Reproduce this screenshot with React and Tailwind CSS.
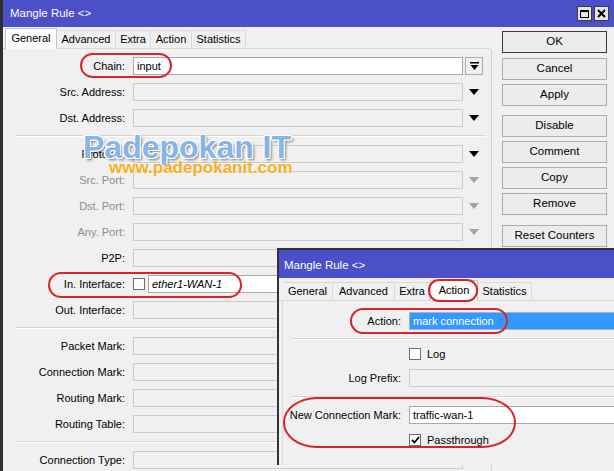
import React from 'react';

const font = "font-['Liberation_Sans',Arial,sans-serif]";

const DownArrow = ({ muted }) => (
  <svg width="10" height="6" viewBox="0 0 10 6">
    <path d="M0 0h10L5 6z" fill={muted ? '#a3a3a3' : '#000'} />
  </svg>
);

const Field = ({ children, white, className = '' }) => (
  <div
    className={`flex h-[18px] shrink-0 items-center overflow-hidden whitespace-nowrap border px-[3px] ${
      white ? 'border-[#a9a9a9] bg-white' : 'border-[#cbcbcb] bg-[#f0f0f0]'
    } ${className}`}
  >
    {children}
  </div>
);

const Row = ({ label, muted, arrow, children }) => (
  <div className="flex h-[18px] items-center">
    <div className={`w-[130px] shrink-0 pr-[8px] text-right ${muted ? 'text-[#8c8c8c]' : ''}`}>{label}</div>
    {children || <Field className="w-[330px]" />}
    {arrow && (
      <div className="ml-[2px] flex w-[18px] justify-center">
        <DownArrow muted={arrow === 'muted'} />
      </div>
    )}
  </div>
);

const Sep = ({ className = '' }) => (
  <div className={`h-[2px] border-t border-b border-t-[#d5d5d5] border-b-white ${className}`} />
);

const Checkbox = ({ checked }) => (
  <div className="flex h-[12px] w-[12px] shrink-0 items-center justify-center border border-[#6f6f6f] bg-white">
    {checked && (
      <svg width="9" height="8" viewBox="0 0 9 8">
        <path d="M1 4l2.5 2.5L8 1" fill="none" stroke="#000" strokeWidth="1.8" />
      </svg>
    )}
  </div>
);

const Tabs = ({ tabs, active, className = '' }) => (
  <div className={`flex h-[21px] items-end border-b border-[#d9d9d9] ${className}`}>
    {tabs.map(([name, w]) =>
      name === active ? (
        <div
          key={name}
          className={`-mb-px flex h-[21px] items-center justify-center border border-b-0 border-[#c5c5c5] bg-[#fbfbfb] pb-[1px] ${w}`}
        >
          {name}
        </div>
      ) : (
        <div
          key={name}
          className={`flex h-[18px] items-center justify-center border border-b-0 border-l-0 border-[#d9d9d9] bg-[#f0f0f0] ${w}`}
        >
          {name}
        </div>
      )
    )}
  </div>
);

const Btn = ({ children, strong, className = '' }) => (
  <div
    className={`flex h-[22px] items-center justify-center border bg-[#ececec] text-[11.5px] ${
      strong ? 'border-[#3a3a3a]' : 'border-[#adadad]'
    } ${className}`}
  >
    {children}
  </div>
);

const Oval = ({ className }) => (
  <div className={`pointer-events-none absolute border-[2.5px] border-[#d8232a] ${className}`} />
);

export default function App() {
  return (
    <div className={`relative h-[471px] w-[614px] overflow-hidden bg-[#f0f0f0] text-[11px] leading-none text-black ${font}`}>
      {/* main window */}
      <div className="flex h-full flex-col border-l-[3px] border-[#2f2f2f]">
        <div className="flex h-[27px] shrink-0 items-center bg-[#4b4fc8] pl-[7px] text-white">
          <span className="text-[11.5px]">Mangle Rule &lt;&gt;</span>
          <div className="ml-auto mr-[5px] flex gap-[2px]">
            <div className="flex h-[15px] w-[15px] items-center justify-center border border-[#3c3c3c] bg-[#e4e4e4]">
              <div className="h-[8px] w-[9px] border border-t-2 border-black" />
            </div>
            <div className="flex h-[15px] w-[15px] items-center justify-center border border-[#3c3c3c] bg-[#e4e4e4]">
              <svg width="9" height="9" viewBox="0 0 9 9">
                <path d="M1 1l7 7M8 1L1 8" stroke="#000" strokeWidth="2" />
              </svg>
            </div>
          </div>
        </div>

        <div className="flex min-h-0 flex-1">
          <div className="w-[488px] shrink-0">
            <Tabs
              className="mt-[1px] pl-[2px]"
              active="General"
              tabs={[
                ['General', 'w-[52px]'],
                ['Advanced', 'w-[59px]'],
                ['Extra', 'w-[35px]'],
                ['Action', 'w-[41px]'],
                ['Statistics', 'w-[54px]'],
              ]}
            />
            <div className="flex flex-col gap-2 pt-[8px]">
              <Row label="Chain:">
                <Field white className="w-[330px]">input</Field>
                <div className="ml-[2px] flex h-[18px] w-[18px] items-center justify-center border border-[#adadad] bg-[#f0f0f0]">
                  <svg width="9" height="8" viewBox="0 0 9 8">
                    <rect x="0" y="0" width="9" height="1.5" fill="#000" />
                    <path d="M0.5 3h8L4.5 8z" fill="#000" />
                  </svg>
                </div>
              </Row>
              <Row label="Src. Address:" arrow="dark" />
              <Row label="Dst. Address:" arrow="dark" />
              <Sep className="ml-[12px] mr-[5px]" />
              <Row label="Protocol:" arrow="dark" />
              <Row label="Src. Port:" muted arrow="muted" />
              <Row label="Dst. Port:" muted arrow="muted" />
              <Row label="Any. Port:" muted arrow="muted" />
              <Row label="P2P:" arrow="dark" />
              <Row label="In. Interface:">
                <Checkbox />
                <Field white className="ml-[3px] w-[315px] italic">ether1-WAN-1</Field>
              </Row>
              <Row label="Out. Interface:" arrow="dark" />
              <Sep className="ml-[12px] mr-[5px]" />
              <Row label="Packet Mark:" arrow="dark" />
              <Row label="Connection Mark:" arrow="dark" />
              <Row label="Routing Mark:" arrow="dark" />
              <Row label="Routing Table:" arrow="dark" />
              <Sep className="ml-[12px] mr-[5px]" />
              <Row label="Connection Type:" arrow="dark" />
            </div>
          </div>

          <div className="mt-[23px] w-px bg-[#d2d2d2]" />

          <div className="ml-[10px] flex w-[105px] flex-col pt-[4px]">
            <Btn strong>OK</Btn>
            <Btn className="mt-[5px]">Cancel</Btn>
            <Btn className="mt-[4px]">Apply</Btn>
            <Btn className="mt-[9px]">Disable</Btn>
            <Btn className="mt-[4px]">Comment</Btn>
            <Btn className="mt-[4px]">Copy</Btn>
            <Btn className="mt-[4px]">Remove</Btn>
            <Btn className="mt-[10px]">Reset Counters</Btn>
          </div>
        </div>
      </div>

      {/* watermark */}
      <div className="pointer-events-none absolute left-[83px] top-[131px] whitespace-nowrap text-[32px] font-bold leading-none text-[#86b5ea] [text-shadow:1px_1px_0_#fff,-1px_-1px_0_#fff,1px_-1px_0_#fff,-1px_1px_0_#fff,0_1px_0_#fff,0_-1px_0_#fff,1px_0_0_#fff,-1px_0_0_#fff,2px_2px_3px_rgba(0,0,0,0.55)]">
        Padepokan IT
      </div>
      <div className="pointer-events-none absolute left-[109px] top-[159px] whitespace-nowrap text-[17px] font-bold leading-none text-[#f6b01e] [text-shadow:0_0_2px_#fff]">
        www.padepokanit.com
      </div>

      {/* second window */}
      <div className="absolute left-[277px] top-[248px] flex h-[217px] w-[337px] flex-col overflow-hidden border-l-2 border-t-2 border-[#333] bg-[#f0f0f0]">
        <div className="flex h-[28px] shrink-0 items-center bg-[#4b4fc8] pl-[5px] pt-[3px] text-[11.5px] text-white">
          Mangle Rule &lt;&gt;
        </div>
        <Tabs
          className="mt-[2px] pl-[4px]"
          active="Action"
          tabs={[
            ['General', 'w-[50px]'],
            ['Advanced', 'w-[62px]'],
            ['Extra', 'w-[35px]'],
            ['Action', 'w-[48px]'],
            ['Statistics', 'w-[54px]'],
          ]}
        />
        <div className="ml-[3px] flex flex-1 flex-col border-l border-[#d9d9d9] pt-[11px]">
          <div className="flex h-[18px] items-center">
            <div className="w-[126px] shrink-0 pr-[8px] text-right">Action:</div>
            <div className="flex h-[18px] w-[240px] shrink-0 items-center border border-[#9fb7d6] bg-[#3399ff] px-[3px] text-white">
              mark connection
            </div>
          </div>
          <Sep className="ml-[8px] mt-[8px]" />
          <div className="mt-[5px] flex h-[18px] items-center">
            <div className="w-[126px] shrink-0" />
            <Checkbox />
            <span className="ml-[6px]">Log</span>
          </div>
          <div className="mt-[6px] flex h-[18px] items-center">
            <div className="w-[126px] shrink-0 pr-[8px] text-right">Log Prefix:</div>
            <Field className="w-[240px]" />
          </div>
          <Sep className="ml-[8px] mt-[9px]" />
          <div className="mt-[8px] flex h-[18px] items-center">
            <div className="w-[126px] shrink-0 pr-[8px] text-right">New Connection Mark:</div>
            <Field white className="w-[240px]">traffic-wan-1</Field>
          </div>
          <div className="mt-[7px] flex h-[18px] items-center">
            <div className="w-[126px] shrink-0" />
            <Checkbox checked />
            <span className="ml-[6px]">Passthrough</span>
          </div>
        </div>
      </div>

      {/* annotations */}
      <Oval className="left-[80px] top-[53px] h-[25px] w-[92px] rounded-[14px]" />
      <Oval className="left-[48px] top-[272px] h-[26px] w-[194px] rounded-[14px]" />
      <Oval className="left-[428px] top-[279px] h-[23px] w-[50px] rounded-[11px]" />
      <Oval className="left-[350px] top-[308px] h-[26px] w-[158px] rounded-[14px]" />
      <Oval className="left-[283px] top-[397px] h-[51px] w-[233px] rounded-[34px/25px]" />
    </div>
  );
}
